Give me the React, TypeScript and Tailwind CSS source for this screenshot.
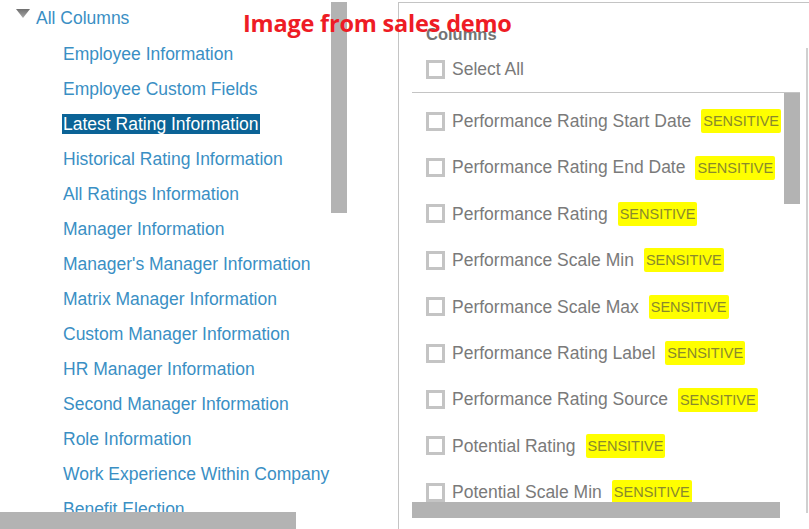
import React from 'react'

const groups = [
  'Employee Information',
  'Employee Custom Fields',
  'Latest Rating Information',
  'Historical Rating Information',
  'All Ratings Information',
  'Manager Information',
  "Manager's Manager Information",
  'Matrix Manager Information',
  'Custom Manager Information',
  'HR Manager Information',
  'Second Manager Information',
  'Role Information',
  'Work Experience Within Company',
  'Benefit Election',
]

const columns = [
  'Performance Rating Start Date',
  'Performance Rating End Date',
  'Performance Rating',
  'Performance Scale Min',
  'Performance Scale Max',
  'Performance Rating Label',
  'Performance Rating Source',
  'Potential Rating',
  'Potential Scale Min',
]

function Checkbox() {
  return <span className="w-[19px] h-[19px] shrink-0 border-[3px] border-[#c4c4c4] bg-white" />
}

export default function App() {
  return (
    <div className="relative flex w-[809px] h-[529px] overflow-hidden bg-white font-['Liberation_Sans',Arial,sans-serif]">
      {/* tree of column groups */}
      <div className="relative w-[398px] shrink-0">
        <div className="flex items-center h-[35px] mt-px">
          <svg className="ml-[16px] mr-[6px] -mt-[10px]" width="14" height="9" viewBox="0 0 14 9">
            <defs>
              <linearGradient id="tri" x1="0" y1="0" x2="0" y2="1">
                <stop offset="0" stopColor="#6f6f6f" />
                <stop offset="1" stopColor="#a8a8a8" />
              </linearGradient>
            </defs>
            <polygon points="0,0 14,0 7,9" fill="url(#tri)" />
          </svg>
          <span className="text-[17.5px] text-[#3a8fc4]">All Columns</span>
        </div>
        {groups.map((g) => (
          <div key={g} className="flex items-center h-[35px] pl-[62px]">
            {g === 'Latest Rating Information' ? (
              <span className="text-[17.5px] leading-[20px] px-px bg-[#0b6396] text-white">{g}</span>
            ) : (
              <span className="text-[17.5px] leading-[20px] px-px text-[#3a8fc4]">{g}</span>
            )}
          </div>
        ))}
        <div className="absolute left-[331px] top-[2px] w-[16px] h-[211px] bg-[#b3b3b3]" />
        <div className="absolute left-0 top-[512px] w-[296px] h-[17px] bg-[#b3b3b3]" />
      </div>

      {/* column picker */}
      <div className="mt-[2px] flex-1 border-l border-t border-[#c4c4c4] flex flex-col">
        <div className="pl-[27px] pt-[21px] h-[43px] text-[16.5px] font-bold text-[#747474] leading-[20px]">Columns</div>
        <div className="flex items-center gap-[7px] pl-[27px] h-[46px]">
          <Checkbox />
          <span className="text-[17.5px] text-[#7a7a7a]">Select All</span>
        </div>
        <div className="flex flex-1">
          <div className="relative ml-[13px] w-[388px] h-[426px] border-t border-[#c4c4c4] pt-[5px]">
            {columns.map((c) => (
              <div key={c} className="flex items-center h-[46.4px] pl-[14px]">
                <Checkbox />
                <span className="ml-[7px] text-[17.5px] text-[#7a7a7a] whitespace-nowrap">{c}</span>
                <span className="ml-[10px] px-[2px] py-[4px] bg-[#ffff00] text-[14.5px] leading-[16px] text-[#8a8a2c] rounded-[2px] whitespace-nowrap">SENSITIVE</span>
              </div>
            ))}
            <div className="absolute left-[372px] top-0 w-[16px] h-[111px] bg-[#b3b3b3]" />
            <div className="absolute left-0 top-[409px] w-[368px] h-[16px] bg-[#b3b3b3]" />
          </div>
          <div className="ml-[6px] mt-[-44px] mb-[16px] border-l-2 border-[#d0d0d0]" />
        </div>
      </div>

      <div className="absolute left-[243px] top-[8px] text-[23.5px] leading-[30px] font-bold text-[#ee1c25] font-['Open_Sans','Noto_Sans',sans-serif] tracking-[-0.2px]">
        Image from sales demo
      </div>
    </div>
  )
}
